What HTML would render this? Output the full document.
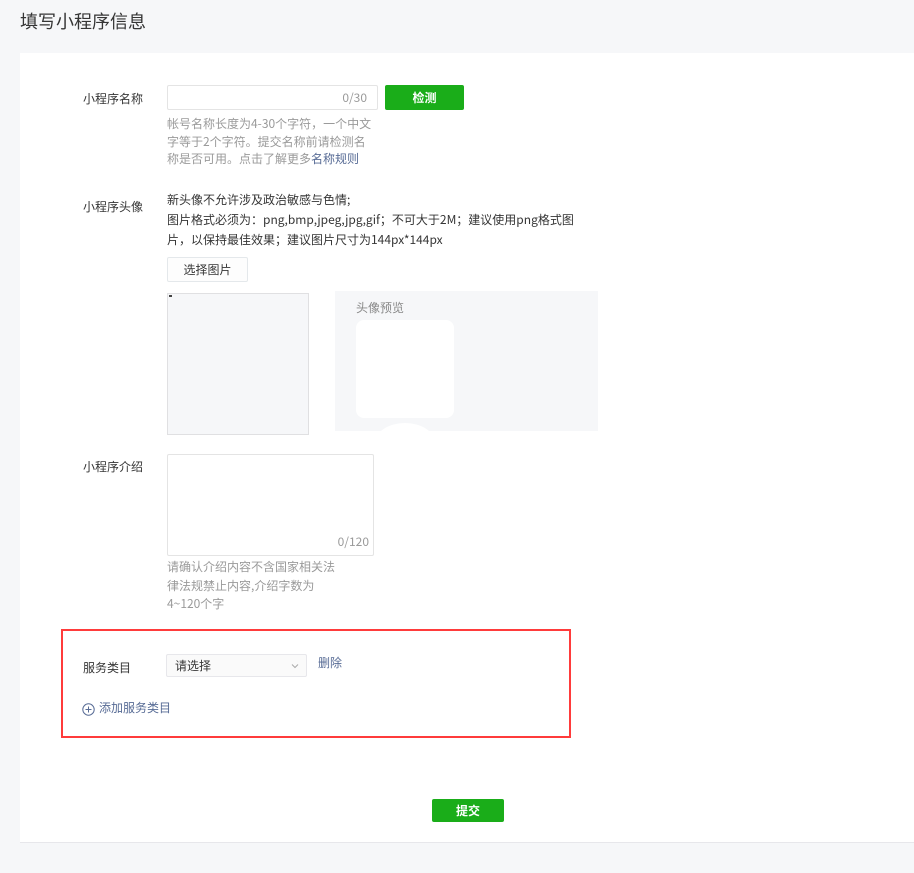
<!DOCTYPE html>
<html><head><meta charset="utf-8"><style>
*{margin:0;padding:0;box-sizing:border-box}
body{width:914px;height:873px;background:#f6f7f9;font-family:"Noto Sans CJK SC","Liberation Sans",sans-serif;font-size:12px;color:#353535;position:relative;overflow:hidden}
.a{position:absolute;white-space:nowrap}
.g{color:#9a9a9a}
.l{color:#576b95}
.btn{position:absolute;background:#1aad19;color:#fff;font-weight:bold;text-align:center;border-radius:2px}
</style></head><body>
<div class="a" style="left:20px;top:8px;font-size:18px;line-height:26px">填写小程序信息</div>
<div class="a" style="left:20px;top:53px;width:894px;height:790px;background:#fff;border-bottom:1px solid #e7e7eb"></div>

<div class="a" style="left:83px;top:90px;line-height:18px">小程序名称</div>
<div class="a" style="left:167px;top:85px;width:211px;height:25px;border:1px solid #e4e4e4;border-radius:2px"><span class="a g" style="right:10px;top:4px;line-height:16px">0/30</span></div>
<div class="btn" style="left:385px;top:85px;width:79px;height:25px;line-height:25px">检测</div>
<div class="a g" style="left:167px;top:115px;line-height:17.7px">帐号名称长度为4-30个字符，一个中文<br>字等于2个字符。提交名称前请检测名<br>称是否可用。点击了解更多<span class="l">名称规则</span></div>

<div class="a" style="left:83px;top:198px;line-height:18px">小程序头像</div>
<div class="a" style="left:167px;top:190px;line-height:20px">新头像不允许涉及政治敏感与色情;<br>图片格式必须为：png,bmp,jpeg,jpg,gif；不可大于2M；建议使用png格式图<br>片，以保持最佳效果；建议图片尺寸为144px*144px</div>
<div class="a" style="left:167px;top:257px;width:81px;height:25px;border:1px solid #e4e8eb;border-radius:2px;text-align:center;line-height:23px;background:#fdfdfd">选择图片</div>
<div class="a" style="left:167px;top:293px;width:142px;height:142px;border:1px solid #e0e0e2;background:#f6f7f9"><div class="a" style="left:1px;top:1px;width:3px;height:2px;background:#444"></div></div>
<div class="a" style="left:335px;top:291px;width:263px;height:140px;background:#f6f7f9;overflow:hidden">
<div class="a g" style="left:21px;top:8px;line-height:18px;color:#888">头像预览</div>
<div class="a" style="left:21px;top:29px;width:98px;height:98px;background:#fff;border-radius:8px"></div>
<div class="a" style="left:40px;top:132px;width:60px;height:40px;background:#fff;border-radius:50%"></div>
</div>

<div class="a" style="left:83px;top:458px;line-height:18px">小程序介绍</div>
<div class="a" style="left:167px;top:454px;width:207px;height:102px;border:1px solid #e4e4e4;border-radius:2px"><span class="a g" style="right:4px;bottom:5px;line-height:16px">0/120</span></div>
<div class="a g" style="left:167px;top:558px;line-height:18.5px">请确认介绍内容不含国家相关法<br>律法规禁止内容,介绍字数为<br>4~120个字</div>

<div class="a" style="left:61px;top:629px;width:510px;height:109px;border:2px solid #ff3b3b"></div>
<div class="a" style="left:83px;top:659px;line-height:18px">服务类目</div>
<div class="a" style="left:166px;top:654px;width:141px;height:23px;border:1px solid #e7e7eb;border-radius:2px;background:#fafafa"><span class="a" style="left:8px;top:2px;line-height:17px">请选择</span>
<svg class="a" style="left:124px;top:8px" width="8" height="6" viewBox="0 0 8 6"><path d="M1 1.5L4 4.5L7 1.5" fill="none" stroke="#aaa" stroke-width="1"/></svg></div>
<div class="a l" style="left:318px;top:654px;line-height:18px">删除</div>
<svg class="a" style="left:82px;top:703px" width="13" height="13" viewBox="0 0 13 13"><circle cx="6.5" cy="6.5" r="5.7" fill="none" stroke="#576b95" stroke-width="1"/><path d="M6.5 3.5v6M3.5 6.5h6" stroke="#576b95" stroke-width="1"/></svg>
<div class="a l" style="left:99px;top:699px;line-height:18px">添加服务类目</div>

<div class="btn" style="left:432px;top:799px;width:72px;height:23px;line-height:23px">提交</div>
</body></html>
